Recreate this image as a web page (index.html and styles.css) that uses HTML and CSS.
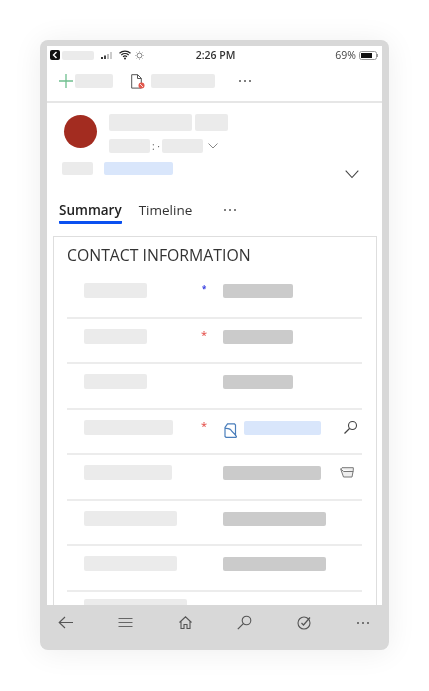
FILE: index.html
```html
<!DOCTYPE html>
<html>

<head>
  <title>Contact</title>
  <link rel="stylesheet" href="styles.css">
</head>

<body>
  <div class="phone">
    <div class="screen">
      <!-- Barra de estado -->
      <div class="status">
        <div class="status-left">
          <svg class="ico-back" width="10" height="10" viewBox="0 0 10 10"><rect width="10" height="10" rx="2" fill="#111"/><path d="M6.500 2 3.500 5l3 3" fill="none" stroke="#fff" stroke-width="1.400"/></svg>
          <span class="ph ph-status"></span>
          <svg class="ico-signal" width="13" height="10" viewBox="0 0 13 10"><rect x="0" y="7" width="2" height="2" fill="#333"/><rect x="3" y="5.500" width="2" height="3.500" fill="#444"/><rect x="6" y="4" width="2" height="5" fill="#bbb"/><rect x="9" y="2" width="2" height="7" fill="#ccc"/></svg>
          <svg class="ico-wifi" width="12" height="10" viewBox="0 0 12 10"><path d="M.500 3.200C3.600 .400 8.400 .400 11.500 3.200M2.300 5C4.400 3.200 7.600 3.200 9.700 5M4 6.700c1.200-.900 2.800-.900 4 0" fill="none" stroke="#222" stroke-width="1.200"/><circle cx="6" cy="8.500" r="1" fill="#222"/></svg>
          <svg class="ico-sun" width="9" height="9" viewBox="0 0 9 9"><circle cx="4.500" cy="4.500" r="2.400" fill="none" stroke="#888"/><path d="M4.500 0v1.500M4.500 7.500V9M0 4.500h1.500M7.500 4.500H9M1.300 1.300l1 1M6.700 6.700l1 1M7.700 1.300l-1 1M2.300 6.700l-1 1" stroke="#aaa" stroke-width=".800"/></svg>
        </div>
        <span class="clock">2:26 PM</span>
        <div class="status-right">
          <span class="battery-text">69%</span>
          <svg width="20" height="9" viewBox="0 0 20 9"><rect x=".500" y=".500" width="17" height="8" rx="2" fill="none" stroke="#999"/><rect x="2" y="2" width="11" height="5" fill="#111"/><path d="M18.500 3v3" stroke="#999"/></svg>
        </div>
      </div>

      <!-- Barra de comandos -->
      <div class="toolbar">
        <svg class="ico-plus" width="14" height="14" viewBox="0 0 14 14"><path d="M7 0v14M0 7h14" stroke="#6fbf8f" stroke-width="1.300"/></svg>
        <span class="ph ph-new"></span>
        <svg class="ico-doc" width="14" height="15" viewBox="0 0 14 15"><path d="M.700 .700h6l3.600 3.600v9.800H.700zM6.500 .700v3.800h3.800" fill="#fff" stroke="#555"/><circle cx="10.500" cy="11.500" r="3" fill="#e2574c"/><path d="M9 10l3 3" stroke="#fff" stroke-width=".800"/></svg>
        <span class="ph ph-cmd"></span>
        <span class="dots dots-cmd"><i></i><i></i><i></i></span>
      </div>

      <!-- Cabecera del registro -->
      <div class="head">
        <div class="head-top">
          <div class="avatar"></div>
          <div class="head-lines">
            <div class="line line-name">
              <span class="ph ph-name"></span>
              <span class="ph ph-name2"></span>
            </div>
            <div class="line line-sub">
              <span class="ph ph-sub"></span>
              <span class="sep">: ·</span>
              <span class="ph ph-sub"></span>
              <svg class="chev-small" width="10" height="6" viewBox="0 0 10 6"><path d="M.500 .500 5 5 9.500 .500" fill="none" stroke="#888"/></svg>
            </div>
          </div>
        </div>
        <div class="head-tags">
          <span class="ph ph-tag"></span>
          <span class="ph-link ph-taglink"></span>
          <svg class="chev-big" width="14" height="9" viewBox="0 0 14 9"><path d="M.700 .700 7 7.500 13.300 .700" fill="none" stroke="#444" stroke-width="1.100"/></svg>
        </div>
      </div>

      <!-- Pestañas -->
      <div class="tabs">
        <span class="tab tab-active">Summary</span>
        <span class="tab">Timeline</span>
        <span class="dots dots-tab"><i></i><i></i><i></i></span>
      </div>

      <!-- Tarjeta de contacto -->
      <div class="card">
        <h2 class="card-title">CONTACT INFORMATION</h2>

        <div class="row">
          <span class="ph label w63"></span>
          <span class="mark mark-blue">*</span>
          <span class="ph-value w70"></span>
        </div>
        <div class="row">
          <span class="ph label w63"></span>
          <span class="mark">*</span>
          <span class="ph-value w70"></span>
        </div>
        <div class="row">
          <span class="ph label w63"></span>
          <span class="mark"></span>
          <span class="ph-value w70"></span>
        </div>
        <div class="row">
          <span class="ph label w89"></span>
          <span class="mark">*</span>
          <div class="lookup">
            <svg width="13" height="15" viewBox="0 0 13 15"><path d="M3.500 .800h7l1 1.200v10.500l1 .800-.500 1H2l-1-.800V4.500zM1 5.500c3-.300 6 1 7 3l3.500 3.500" fill="#fff" stroke="#4a7ebb" stroke-width="1.200"/></svg>
            <span class="ph-link w77"></span>
          </div>
          <svg class="row-ico ico-search" width="15" height="15" viewBox="0 0 15 15"><circle cx="9.500" cy="5.500" r="4" fill="none" stroke="#444" stroke-width="1.100"/><path d="M6.500 8.500l-5 5" stroke="#444" stroke-width="1.300"/></svg>
        </div>
        <div class="row">
          <span class="ph label w88"></span>
          <span class="mark"></span>
          <span class="ph-value w98"></span>
          <svg class="row-ico ico-mail" width="14" height="11" viewBox="0 0 14 11"><path d="M.700 2 2 .700h11.300v2.500L12 10H3.500zM.700 2l3 2.500h9.600" fill="#eee" stroke="#777"/></svg>
        </div>
        <div class="row">
          <span class="ph label w93"></span>
          <span class="mark"></span>
          <span class="ph-value w103"></span>
        </div>
        <div class="row">
          <span class="ph label w93"></span>
          <span class="mark"></span>
          <span class="ph-value w103"></span>
        </div>
        <div class="row row-last">
          <span class="ph label w103"></span>
        </div>
      </div>
    </div>

    <!-- Navegación inferior -->
    <div class="nav">
      <svg width="15" height="15" viewBox="0 0 15 15"><path d="M7 2 1.200 7.500 7 13M1.200 7.500H15" fill="none" stroke="#555" stroke-width="1.100"/></svg>
      <svg width="15" height="15" viewBox="0 0 15 15"><path d="M.500 3.500h14M.500 7.500h14M.500 11.500h14" stroke="#666" stroke-width="1.100"/></svg>
      <svg width="15" height="15" viewBox="0 0 15 15"><path d="M1.500 7.500 7.500 1.800l6 5.700M3 6.500v7h3V9.500h3v4h3v-7" fill="none" stroke="#555" stroke-width="1.100"/></svg>
      <svg width="15" height="15" viewBox="0 0 15 15"><circle cx="9.500" cy="5.500" r="4.300" fill="none" stroke="#555" stroke-width="1.100"/><path d="M6.300 8.700.800 14.200" stroke="#555" stroke-width="1.200"/></svg>
      <svg width="15" height="15" viewBox="0 0 15 15"><circle cx="7" cy="8" r="6" fill="none" stroke="#555" stroke-width="1.100"/><path d="M4.500 8l2 2L13 2.500" fill="none" stroke="#555" stroke-width="1.200"/></svg>
      <span class="dots dots-nav"><i></i><i></i><i></i></span>
    </div>
  </div>
</body>

</html>
```

FILE: styles.css
```css
html,
body {
  margin: 0;
  height: 100%;
  overflow: hidden;
  background-color: #fff;
  font-family: "Open Sans", "Liberation Sans", sans-serif;
}

body {
  padding: 40px 40px 41px;
  box-sizing: border-box;
}

svg {
  display: block;
  flex: none;
}

/* Marco del teléfono */
.phone {
  width: 349px;
  height: 610px;
  background-color: #d8d8d8;
  border-radius: 8px;
  box-shadow: 0 2px 30px rgba(0, 0, 0, 0.07);
  padding: 6px 7px 0;
  box-sizing: border-box;
  display: flex;
  flex-direction: column;
  filter: blur(0.35px);
}

.screen {
  flex: 1;
  background-color: #fff;
  overflow: hidden;
  min-height: 0;
}

/* Bloques grises de relleno */
.ph,
.ph-value,
.ph-link {
  display: block;
  flex: none;
  border-radius: 2px;
  background-color: #ebebeb;
}

.ph-value {
  height: 14px;
  margin-top: 1px;
  background-color: #cbcbcb;
}

.ph-link {
  background-color: #d9e6fb;
}

.w63 { width: 63px; }
.w70 { width: 70px; }
.w77 { width: 77px; height: 14px; margin-top: 1px; }
.w88 { width: 88px; }
.w89 { width: 89px; }
.w93 { width: 93px; }
.w98 { width: 98px; }
.w103 { width: 103px; }

.dots {
  display: flex;
  flex: none;
  gap: 3px;
}

.dots i {
  width: 2px;
  height: 2px;
  border-radius: 50%;
  background-color: #555;
}

/* Barra de estado */
.status {
  height: 19px;
  padding: 0 3px 1px;
  box-sizing: border-box;
  display: flex;
  align-items: center;
  justify-content: space-between;
  position: relative;
}

.status-left,
.status-right {
  display: flex;
  align-items: center;
}

.ph-status {
  width: 32px;
  height: 9px;
  margin-left: 2px;
}

.ico-signal {
  margin-left: 7px;
}

.ico-wifi {
  margin-left: 5px;
}

.ico-sun {
  margin-left: 4px;
}

.clock {
  position: absolute;
  left: 0;
  right: 0;
  text-align: center;
  font-size: 10.500px;
  font-weight: 600;
  color: #333;
  margin-left: 2px;
}

.battery-text {
  font-size: 10.500px;
  color: #444;
  margin-right: 3px;
}

/* Barra de comandos */
.toolbar {
  height: 38px;
  box-sizing: border-box;
  border-bottom: 2px solid #e6e6e6;
  padding: 0 0 4px 12px;
  display: flex;
  align-items: center;
}

.ph-new {
  width: 38px;
  height: 14px;
  margin-left: 2px;
}

.ico-doc {
  margin-left: 18px;
}

.ph-cmd {
  width: 64px;
  height: 14px;
  margin-left: 6px;
}

.dots-cmd {
  margin-left: 24px;
}

/* Cabecera */
.head {
  padding: 11px 0 0 15px;
}

.head-top {
  display: flex;
  gap: 12px;
  padding-left: 2px;
}

.avatar {
  width: 33px;
  height: 33px;
  margin-top: 1px;
  border-radius: 50%;
  background-color: #a32c20;
}

.line {
  display: flex;
  align-items: center;
}

.line-name {
  gap: 3px;
}

.ph-name {
  width: 83px;
  height: 17px;
}

.ph-name2 {
  width: 33px;
  height: 17px;
}

.line-sub {
  margin-top: 8px;
}

.ph-sub {
  width: 41px;
  height: 14px;
}

.sep {
  width: 12px;
  font-size: 10px;
  line-height: 14px;
  text-align: center;
  color: #666;
}

.chev-small {
  margin-left: 5px;
}

.head-tags {
  display: flex;
  margin-top: 9px;
  height: 16px;
}

.ph-tag {
  width: 31px;
  height: 13px;
}

.ph-taglink {
  width: 69px;
  height: 13px;
  margin-left: 11px;
}

.chev-big {
  margin: 8px 0 0 172px;
}

/* Pestañas */
.tabs {
  height: 36px;
  margin-top: 22px;
  padding-left: 12px;
  box-sizing: border-box;
  display: flex;
  align-items: flex-start;
}

.tab {
  font-size: 13.500px;
  line-height: 20px;
  color: #333;
  margin-right: 17px;
}

.tab-active {
  font-weight: 600;
  color: #222;
  padding-bottom: 1px;
  border-bottom: 3px solid #0a50f0;
  border-radius: 1px;
}

.dots-tab {
  margin: 9px 0 0 15px;
}

/* Tarjeta */
.card {
  margin: 0 5px 0 6px;
  border: 1px solid #dedede;
  padding: 0 14px 0 13px;
}

.card-title {
  margin: 0;
  height: 36px;
  font-size: 15.800px;
  font-weight: 400;
  line-height: 37px;
  color: #333;
}

.row {
  height: 45.500px;
  box-sizing: border-box;
  padding-top: 10px;
  border-bottom: 2px solid #ececec;
  display: grid;
  grid-template-columns: 17px 117px 22px 117px 1fr;
  align-items: start;
}

.row-last {
  padding-top: 7px;
}

.label {
  grid-column: 2;
  height: 15px;
}

.mark {
  grid-column: 3;
  font-size: 11px;
  line-height: 11px;
  color: #e2403a;
}

.mark-blue {
  font-size: 8px;
  font-weight: 700;
  padding-left: 1px;
  color: #3a40e0;
}

.ph-value,
.lookup {
  grid-column: 4;
}

.lookup {
  display: flex;
  align-items: flex-start;
  gap: 7px;
  padding-left: 1px;
}

.lookup svg {
  margin-top: 3px;
}

.row-ico {
  grid-column: 5;
}

.ico-search {
  margin-left: 3px;
}

.ico-mail {
  margin-top: 2px;
}

/* Navegación inferior */
.nav {
  height: 45px;
  flex: none;
  padding: 10px 13px 0 11px;
  box-sizing: border-box;
  display: flex;
  align-items: flex-start;
  justify-content: space-between;
}

.dots-nav {
  margin-top: 7px;
}
```
